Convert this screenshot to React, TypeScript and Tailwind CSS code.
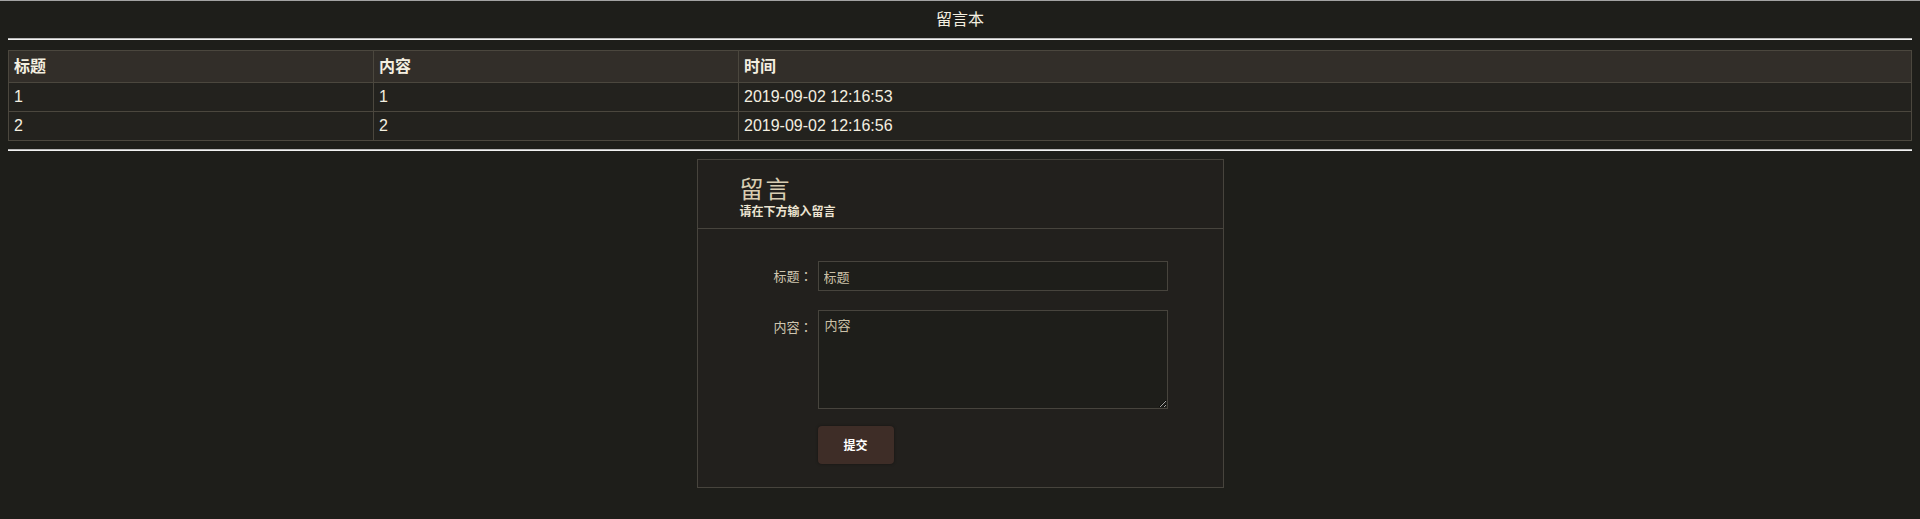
const rows = [
  { title: "1", content: "1", time: "2019-09-02 12:16:53" },
  { title: "2", content: "2", time: "2019-09-02 12:16:56" },
];

function Rule({ className = "" }: { className?: string }) {
  return <div className={"h-[2px] border-t border-[#b9b9b9] border-b border-b-[#f2f2f2] " + className} />;
}

export default function App() {
  return (
    <div className="min-h-[519px] bg-[#1e1e1a] border-t border-[#a3a3a3] px-2 font-['Liberation_Sans','Noto_Sans_CJK_SC',sans-serif] text-[#f4efe0]">
      <div className="h-[37px] flex items-center justify-center text-[16px]">留言本</div>
      <Rule />

      {/* message list */}
      <table className="mt-[10px] w-full border-collapse text-[16px]">
        <thead>
          <tr className="bg-[#322e29]">
            <th className="w-[365px] h-[32px] px-[5px] py-0 border border-[#4b473e] text-left font-bold">标题</th>
            <th className="w-[365px] h-[32px] px-[5px] py-0 border border-[#4b473e] text-left font-bold">内容</th>
            <th className="h-[32px] px-[5px] py-0 border border-[#4b473e] text-left font-bold">时间</th>
          </tr>
        </thead>
        <tbody>
          {rows.map((r) => (
            <tr key={r.title} className="bg-[#23221e]">
              <td className="h-[29px] px-[5px] py-0 border border-[#4b473e]">{r.title}</td>
              <td className="h-[29px] px-[5px] py-0 border border-[#4b473e]">{r.content}</td>
              <td className="h-[29px] px-[5px] py-0 border border-[#4b473e]">{r.time}</td>
            </tr>
          ))}
        </tbody>
      </table>

      <Rule className="mt-2" />

      {/* form card */}
      <div className="mt-2 mx-auto w-[527px] border border-[#47443d] bg-[#22201d] font-['Noto_Sans_CJK_SC',sans-serif]">
        <div className="pt-[12px] pb-[10px] pl-[42px] border-b border-[#47443d]">
          <div className="text-[24px] leading-[32px] tracking-[2px] text-[#d8cdb2]">留言</div>
          <div className="text-[12px] leading-[14px] font-bold text-[#ece4d2]">请在下方输入留言</div>
        </div>

        <div className="pt-[32px] pb-[23px]">
          <div className="flex items-center">
            <label className="w-[120px] pr-[5px] text-right text-[13px] text-[#cfc6b0] font-['Noto_Sans_CJK_TC',sans-serif]">标题：</label>
            <input
              defaultValue="标题"
              className="w-[350px] h-[30px] px-[5px] bg-[#1e1e1a] border border-[#47443d] text-[13px] text-[#cbc1a8] outline-none"
            />
          </div>
          <div className="flex items-start mt-[19px]">
            <label className="w-[120px] pr-[5px] pt-[8px] text-right text-[13px] leading-[18px] text-[#cfc6b0] font-['Noto_Sans_CJK_TC',sans-serif]">内容：</label>
            <textarea
              defaultValue="内容"
              className="w-[350px] h-[99px] px-[6px] pt-[5px] bg-[#1e1e1a] border border-[#47443d] text-[13px] leading-[18px] text-[#cbc1a8] outline-none"
            />
          </div>
          <div className="flex mt-[17px] pl-[120px]">
            <button className="w-[76px] h-[38px] rounded bg-[#3e2d27] text-white text-[12px] font-bold shadow-[0_0_3px_rgba(0,0,0,0.4)]">
              提交
            </button>
          </div>
        </div>
      </div>
    </div>
  );
}
